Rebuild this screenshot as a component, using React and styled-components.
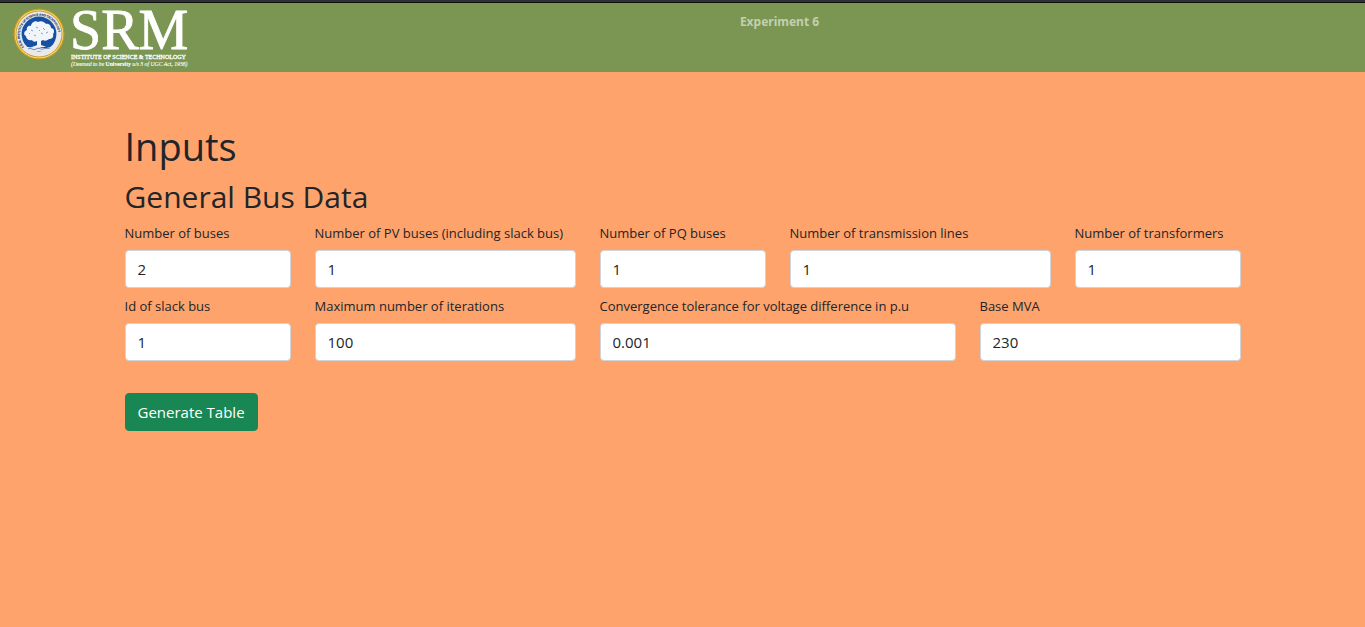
import React from 'react';
import styled, { createGlobalStyle } from 'styled-components';

const GlobalStyle = createGlobalStyle`
  *, *::before, *::after { box-sizing: border-box; }
  body {
    margin: 0;
    background: #ffa36c;
    color: #212529;
    font-family: 'Segoe UI', 'Open Sans', 'Noto Sans', sans-serif;
    font-size: 16px;
    line-height: 24px;
  }
`;

const Header = styled.header`
  display: flex;
  align-items: flex-start;
  height: 72px;
  padding-left: 12px;
  background: #7a9652;
  border-top: 2px solid #2f2f36;
  box-shadow: inset 0 1px 0 #0d0f0a;
`;

const Logo = styled.svg`
  display: block;
  flex: none;
  width: 182px;
  height: 70px;
  overflow: visible;
`;

const Title = styled.p`
  flex: 1;
  margin: 0;
  padding: 8px 0 0;
  text-align: center;
  font-family: 'Segoe UI', 'Noto Sans', sans-serif;
  font-size: 12px;
  line-height: 24px;
  font-weight: 700;
  color: #c4d0b0;
`;

const Main = styled.main`
  max-width: 1140px;
  margin: 0 auto;
  padding: 50px 12px 48px;
`;

const PageHeading = styled.h1`
  margin: 0 0 8px;
  font-size: 38px;
  line-height: 48px;
  font-weight: 400;
`;

const SectionHeading = styled.h2`
  margin: 0 0 8px;
  font-size: 30px;
  line-height: 38px;
  font-weight: 400;
`;

const Fields = styled.div`
  display: grid;
  grid-template-columns: repeat(12, minmax(0, 1fr));
  gap: 9px 24px;
  margin-bottom: 32px;
`;

const Field = styled.div`
  grid-column: span ${(p) => p.$span};
  @media (max-width: 760px) {
    grid-column: span 12;
  }
`;

const Label = styled.label`
  display: block;
  margin-bottom: 7px;
  font-size: 13px;
  line-height: 19px;
`;

const Input = styled.input`
  display: block;
  width: 100%;
  height: 38px;
  padding: 6px 12px;
  border: 1px solid #ced4da;
  border-radius: 4px;
  background: #fff;
  color: #212529;
  font: inherit;
  font-size: 15px;
`;

const SubmitButton = styled.button`
  display: block;
  height: 38px;
  padding: 6px 12px;
  border: 1px solid #198754;
  border-radius: 4px;
  background: #198754;
  color: #fff;
  font: inherit;
  font-size: 15px;
  cursor: pointer;
`;

const FIELDS = [
  { id: 'buses', label: 'Number of buses', value: '2', span: 2 },
  { id: 'pv', label: 'Number of PV buses (including slack bus)', value: '1', span: 3 },
  { id: 'pq', label: 'Number of PQ buses', value: '1', span: 2 },
  { id: 'lines', label: 'Number of transmission lines', value: '1', span: 3 },
  { id: 'transformers', label: 'Number of transformers', value: '1', span: 2 },
  { id: 'slack', label: 'Id of slack bus', value: '1', span: 2 },
  { id: 'iterations', label: 'Maximum number of iterations', value: '100', span: 3 },
  { id: 'tolerance', label: 'Convergence tolerance for voltage difference in p.u', value: '0.001', span: 4 },
  { id: 'mva', label: 'Base MVA', value: '230', span: 3 },
];

function SrmLogo() {
  return (
    <Logo viewBox="12 2 182 70" role="img" aria-label="SRM Institute of Science and Technology">
      <defs>
        <path id="seal-arc" d="M24 47.2 A19.4 19.4 0 1 1 54.7 46.6" />
      </defs>
      <circle cx="39" cy="34" r="25.5" fill="#c99a1c" />
      <circle cx="39" cy="34" r="24.3" fill="#f3dc8a" />
      <circle cx="39" cy="34" r="23.5" fill="#cfa02a" />
      <circle cx="39" cy="34" r="22.5" fill="#e9e9ea" />
      <circle cx="39" cy="34" r="17.4" fill="#1650a4" />
      <text fontFamily="'Liberation Serif', serif" fontSize="3" fill="#2f4470" stroke="#2f4470" strokeWidth="0.2">
        <textPath href="#seal-arc">S.R.M. INSTITUTE OF SCIENCE AND TECHNOLOGY</textPath>
      </text>
      <path
        d="M26 36c-3-1-2-5 1-6-1-3 2-5 4-4 0-3 4-6 7-4 3-2 7 0 8 2 3-1 5 2 5 4 3 0 4 4 2 6 1 3-1 5-4 5-2 2-5 2-6 1l-2 1v4c2 1 4 1 5 2H32c2-1 4-1 5-2v-4c-2 1-4 1-5-1-3 1-6-1-6-4z"
        fill="#f1f4f9"
      />
      <path
        d="M31 30l2 1M36 27l2 1M43 28l2 2M48 32l-2 1M34 35l2 1M41 33l2 1M29 33l1 1M39 30l1 1"
        stroke="#7f9fce"
        strokeWidth="1"
        fill="none"
      />
      <path d="M25 46c5 3 9-1 14 1s9 1 14-1l1 4c-5 4-9 1-15 1s-10 3-15-1z" fill="#e9e9ea" />
      <path d="M28 49c3-2 5 2 8 0s5 1 7 0 4 0 7-1" stroke="#6f87b4" strokeWidth="1" fill="none" />
      <g fill="#fff" fontFamily="'Liberation Serif', serif">
        <text x="70" y="49" fontSize="56" stroke="#fff" strokeWidth="0.8">SRM</text>
        <text x="71" y="59" fontSize="6" stroke="#fff" strokeWidth="0.3">INSTITUTE OF SCIENCE &amp; TECHNOLOGY</text>
        <text x="71" y="66" fontSize="5.7" fontStyle="italic" stroke="#fff" strokeWidth="0.1">
          (Deemed to be <tspan fontWeight="700" fontStyle="normal">University</tspan> u/s 3 of UGC Act, 1956)
        </text>
      </g>
    </Logo>
  );
}

export default function App() {
  return (
    <>
      <GlobalStyle />
      <Header>
        <SrmLogo />
        <Title>Experiment 6</Title>
      </Header>
      <Main>
        <PageHeading>Inputs</PageHeading>
        <SectionHeading>General Bus Data</SectionHeading>
        <form onSubmit={(e) => e.preventDefault()}>
          <Fields>
            {FIELDS.map((f) => (
              <Field key={f.id} $span={f.span}>
                <Label htmlFor={f.id}>{f.label}</Label>
                <Input id={f.id} type="text" inputMode="decimal" defaultValue={f.value} />
              </Field>
            ))}
          </Fields>
          <SubmitButton type="submit">Generate Table</SubmitButton>
        </form>
      </Main>
    </>
  );
}
